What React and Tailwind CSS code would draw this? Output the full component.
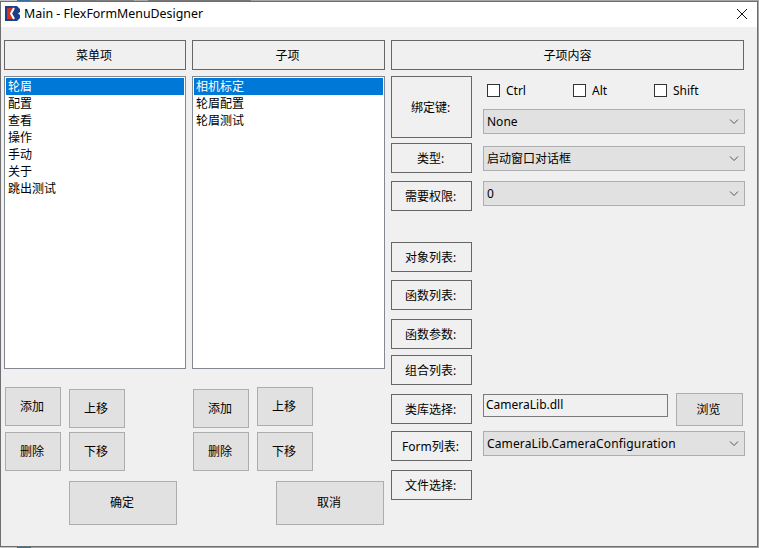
const font = { fontFamily: '"Noto Sans", "Noto Sans CJK SC", sans-serif' };

function Logo() {
  return (
    <svg width="15" height="15" viewBox="0 0 15 15" className="shrink-0">
      <rect width="15" height="15" fill="#fff" />
      <path d="M0 0H12L15 3V6L13 7.5L15 9V12L12 15H0Z" fill="#1c3f86" />
      <path d="M2 2H8L5 7.5L8 13H2Z" fill="#d8301f" />
      <path d="M9 2L6 7.5L9 13" fill="none" stroke="#fff" strokeWidth="2" />
    </svg>
  );
}

function Chevron() {
  return (
    <svg width="10" height="6" viewBox="0 0 10 6" fill="none" stroke="#555" strokeWidth="1">
      <path d="M1 .5 5 4.5 9 .5" />
    </svg>
  );
}

function HeaderBox({ children, className = '' }) {
  return (
    <div className={`flex items-center justify-center border border-[#666] pt-[2px] pr-[2px] text-black ${className}`}>
      {children}
    </div>
  );
}

function Btn({ children, className = '' }) {
  return (
    <div className={`flex w-[56px] h-[39px] items-center justify-center border border-[#adadad] bg-[#e1e1e1] pr-[2px] text-black ${className}`}>
      {children}
    </div>
  );
}

function Combo({ children, className = '' }) {
  return (
    <div className={`flex h-[25px] w-[262px] items-center justify-between border border-[#adadad] bg-[#e1e1e1] pl-[3px] pr-[5px] text-black ${className}`}>
      <span>{children}</span>
      <Chevron />
    </div>
  );
}

function Check({ label, className = '' }) {
  return (
    <label className={`flex items-center gap-[6px] ${className}`}>
      <span className="h-[13px] w-[13px] border border-[#333] bg-white" />
      <span>{label}</span>
    </label>
  );
}

function ListBox({ items, className = '' }) {
  return (
    <div className={`h-[293px] border border-[#828790] bg-white p-px ${className}`}>
      {items.map((item, i) => (
        <div
          key={item}
          className={`h-[17px] pl-[2px] leading-[17px] ${i === 0 ? 'bg-[#0078d7] text-white' : 'text-black'}`}
        >
          {item}
        </div>
      ))}
    </div>
  );
}

const Label = ({ children, className = '' }) => (
  <HeaderBox className={`h-[30px] w-[81px] ${className}`}>{children}</HeaderBox>
);

export default function App() {
  return (
    <div className="h-[548px] w-[759px] overflow-hidden bg-[#a5a5a5]">
      {/* Desktop showing behind the window */}
      <div className="flex h-px">
        <div className="w-[17px] bg-[#c4c4c4]" />
        <div className="w-[14px] bg-[#3a6f9f]" />
        <div className="w-[66px] bg-[#777]" />
        <div className="w-[37px] bg-[#808080]" />
        <div className="w-[14px] bg-[#aaa]" />
        <div className="w-[103px] bg-[#777]" />
      </div>
      <div className="h-[546px] w-[758px] border border-[#6e6e6e] bg-[#f0f0f0] text-[12px]" style={font}>
        {/* Title bar */}
        <div className="flex h-[25px] items-center justify-between bg-white pb-px pl-[4px] pr-[9px]">
          <div className="flex items-center gap-[2px]">
            <Logo />
            <span className="ml-[2px] text-[12.4px] text-black">Main - FlexFormMenuDesigner</span>
          </div>
          <svg width="12" height="12" viewBox="0 0 12 12" stroke="#111" strokeWidth="1">
            <path d="M1 1l10 10M11 1 1 11" />
          </svg>
        </div>

        <div className="flex pl-[3px] pt-[13px]">
          {/* Menu items */}
          <div className="w-[182px]">
            <HeaderBox className="h-[30px]">菜单项</HeaderBox>
            <ListBox className="mt-[6px]" items={['轮眉', '配置', '查看', '操作', '手动', '关于', '跳出测试']} />
            <div className="mt-[18px] flex gap-[8px] pl-px">
              <Btn>添加</Btn>
              <Btn className="mt-[2px]">上移</Btn>
            </div>
            <div className="mt-[4px] flex gap-[8px] pl-px">
              <Btn>删除</Btn>
              <Btn>下移</Btn>
            </div>
            <Btn className="mt-[10px] ml-[65px] !h-[44px] !w-[108px]">确定</Btn>
          </div>

          {/* Sub items */}
          <div className="ml-[6px] w-[193px]">
            <HeaderBox className="h-[30px]">子项</HeaderBox>
            <ListBox className="mt-[6px]" items={['相机标定', '轮眉配置', '轮眉测试']} />
            <div className="mt-[18px] flex gap-[8px] pl-px">
              <Btn className="mt-[2px]">添加</Btn>
              <Btn>上移</Btn>
            </div>
            <div className="mt-[4px] flex gap-[8px] pl-px">
              <Btn>删除</Btn>
              <Btn>下移</Btn>
            </div>
            <Btn className="mt-[10px] ml-[84px] !h-[44px] !w-[108px]">取消</Btn>
          </div>

          {/* Sub item content */}
          <div className="ml-[6px] w-[354px]">
            <HeaderBox className="h-[30px] w-[353px] !pr-0">子项内容</HeaderBox>
            <div className="mt-[6px] flex">
              <div className="w-[92px]">
                <Label className="!h-[62px]">绑定键:</Label>
                <Label className="mt-[5px]">类型:</Label>
                <Label className="mt-[8px]">需要权限:</Label>
                <Label className="mt-[31px]">对象列表:</Label>
                <Label className="mt-[8px]">函数列表:</Label>
                <Label className="mt-[9px]">函数参数:</Label>
                <Label className="mt-[6px]">组合列表:</Label>
                <Label className="mt-[9px]">类库选择:</Label>
                <Label className="mt-[7px]">Form列表:</Label>
                <Label className="mt-[9px]">文件选择:</Label>
              </div>
              <div>
                <div className="flex h-[29px] items-center pl-[4px]">
                  <Check label="Ctrl" className="w-[86px]" />
                  <Check label="Alt" className="w-[81px]" />
                  <Check label="Shift" />
                </div>
                <Combo className="mt-[4px]">None</Combo>
                <Combo className="mt-[12px]">启动窗口对话框</Combo>
                <Combo className="mt-[10px]">0</Combo>
                <div className="mt-[188px] flex items-start">
                  <div className="h-[23px] w-[185px] border border-[#7a7a7a] pl-[2px] leading-[20px] text-black">
                    CameraLib.dll
                  </div>
                  <Btn className="-mt-px ml-[8px] !h-[33px] !w-[67px]">浏览</Btn>
                </div>
                <Combo className="mt-[5px] tracking-[0.14px]">CameraLib.CameraConfiguration</Combo>
              </div>
            </div>
          </div>
        </div>
      </div>
      <div className="flex h-px">
        <div className="w-[17px] bg-[#c4c4c4]" />
        <div className="w-[14px] bg-[#3a6f9f]" />
      </div>
    </div>
  );
}
